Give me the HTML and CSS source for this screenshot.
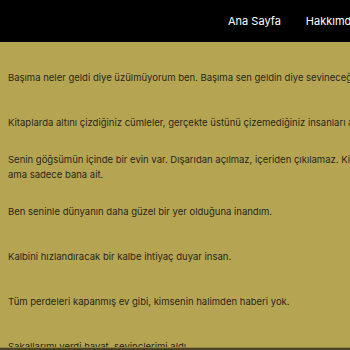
FILE: index.html
```html
<!DOCTYPE html>
<html lang="tr">
<head>
<meta charset="utf-8">
<title>Sözler</title>
<link rel="stylesheet" href="styles.css">
</head>
<body>
<header class="site-header">
  <nav class="nav">
    <a class="nav-link" href="#">Ana Sayfa</a>
    <a class="nav-link" href="#">Hakkımda</a>
    <a class="nav-link" href="#">İletişim</a>
  </nav>
</header>
<main class="content">
  <p class="quote">Başıma neler geldi diye üzülmüyorum ben. Başıma sen geldin diye sevineceğim hep.</p>
  <p class="quote quote-tight">Kitaplarda altını çizdiğiniz cümleler, gerçekte üstünü çizemediğiniz insanları anlatır.</p>
  <p class="quote quote-tight">Senin göğsümün içinde bir evin var. Dışarıdan açılmaz, içeriden çıkılamaz. Kilidi yok, anahtarı yok,<br>ama sadece bana ait.</p>
  <p class="quote">Ben seninle dünyanın daha güzel bir yer olduğuna inandım.</p>
  <p class="quote">Kalbini hızlandıracak bir kalbe ihtiyaç duyar insan.</p>
  <p class="quote">Tüm perdeleri kapanmış ev gibi, kimsenin halimden haberi yok.</p>
  <p class="quote">Sakallarımı verdi hayat, sevinçlerimi aldı.</p>
</main>
<footer class="site-footer"></footer>
</body>
</html>
```
FILE: styles.css
```css
html, body {
  margin: 0;
  padding: 0;
  height: 350px;
  overflow: hidden;
}
body {
  background: #b5a553;
  font-family: Inter, "Noto Sans", sans-serif;
  color: #29271a;
  display: flex;
  flex-direction: column;
}
.site-header {
  background: #000;
  height: 42px;
  flex: none;
  display: flex;
  align-items: center;
  padding-left: 228px;
}
.nav {
  display: flex;
  gap: 25px;
  white-space: nowrap;
}
.nav-link {
  color: #fff;
  text-decoration: none;
  font-size: 11px;
}
.content {
  flex: 1;
  padding: 28px 0 0 8px;
  overflow: hidden;
  min-height: 0;
}
.quote {
  margin: 0 0 30px;
  font-size: 9.5px;
  line-height: 15px;
  white-space: nowrap;
}
.quote-tight {
  margin-bottom: 22px;
}
.site-footer {
  flex: none;
  height: 2px;
  background: #4a4422;
  border-top: 1px solid #8f8346;
}
```
